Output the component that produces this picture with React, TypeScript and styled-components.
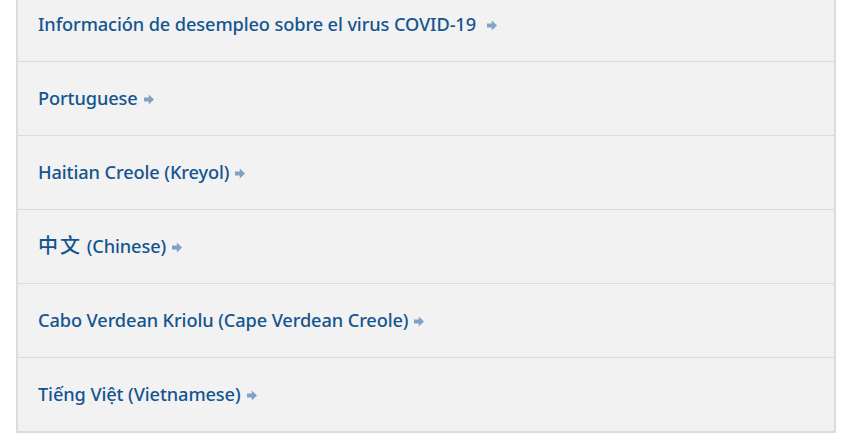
import React from "react";
import styled, { createGlobalStyle } from "styled-components";

const GlobalStyle = createGlobalStyle`
  body {
    margin: 0;
    background: #ffffff;
    font-family: "Noto Sans", "Noto Sans CJK SC", sans-serif;
  }
`;

type LinkItem = {
  id: string;
  label: React.ReactNode;
  spaced?: boolean;
};

const Han = styled.span`
  font-family: "Noto Sans CJK SC", sans-serif;
  font-size: 20px;
  font-weight: 500;
  line-height: 1;
  letter-spacing: 2px;
`;

const items: LinkItem[] = [
  {
    id: "es",
    label: "Información de desempleo sobre el virus COVID-19",
    spaced: true,
  },
  { id: "pt", label: "Portuguese" },
  { id: "ht", label: "Haitian Creole (Kreyol)" },
  {
    id: "zh",
    label: (
      <>
        <Han>中文</Han> (Chinese)
      </>
    ),
  },
  { id: "cv", label: "Cabo Verdean Kriolu (Cape Verdean Creole)" },
  { id: "vi", label: "Tiếng Việt (Vietnamese)" },
];

const Page = styled.div`
  height: 436px;
  overflow: hidden;
  padding: 0 17px 0 16px;
`;

const Panel = styled.ul`
  list-style: none;
  margin: -12px 0 0;
  padding: 0;
  background: #f2f2f2;
  border: 2px solid #dcdcdc;
  border-top: none;
`;

const Row = styled.li<{ isLast: boolean }>`
  display: flex;
  align-items: center;
  box-sizing: border-box;
  height: ${(props) => (props.isLast ? "73px" : "74px")};
  padding: 0 20px 1px;
  border-bottom: ${(props) => (props.isLast ? "none" : "1px solid #dcdcdc")};
`;

const Link = styled.a<{ spaced: boolean }>`
  display: inline-flex;
  align-items: center;
  gap: ${(props) => (props.spaced ? "11px" : "6px")};
  color: #14558f;
  font-size: 18.2px;
  font-weight: 500;
  line-height: 24px;
  text-decoration: none;
  letter-spacing: -0.1px;
`;

const ArrowIcon = styled.svg`
  flex: none;
  width: 10px;
  height: 11px;
  margin-top: 2px;
`;

const Arrow = () => (
  <ArrowIcon viewBox="0 0 10 11" aria-hidden="true">
    <path d="M0 3.6h4.8V0.6L10 5.5 4.8 10.4V7.4H0z" fill="#7fa2c6" />
  </ArrowIcon>
);

const App: React.FC = () => {
  return (
    <>
      <GlobalStyle />
      <Page>
        <Panel>
          {items.map((item, index) => (
            <Row key={item.id} isLast={index === items.length - 1}>
              <Link href="#" spaced={!!item.spaced}>
                <span>{item.label}</span>
                <Arrow />
              </Link>
            </Row>
          ))}
        </Panel>
      </Page>
    </>
  );
};

export default App;
